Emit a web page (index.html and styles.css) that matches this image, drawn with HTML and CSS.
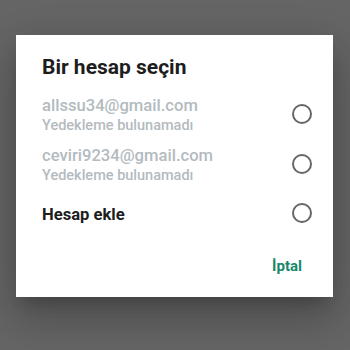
FILE: index.html
```html
<!DOCTYPE html>
<html lang="tr">
<head>
    <meta charset="UTF-8">
    <meta name="viewport" content="width=device-width, initial-scale=1.0">
    <title>Bir hesap seçin</title>
    <link rel="stylesheet" href="styles.css">
</head>
<body>
    <div class="dialog">
        <h1 class="dialog-title">Bir hesap seçin</h1>

        <ul class="account-list">
            <li class="account-row disabled">
                <div class="account-text">
                    <span class="account-email">allssu34@gmail.com</span>
                    <span class="account-note">Yedekleme bulunamadı</span>
                </div>
                <span class="radio"></span>
            </li>
            <li class="account-row disabled">
                <div class="account-text">
                    <span class="account-email">ceviri9234@gmail.com</span>
                    <span class="account-note">Yedekleme bulunamadı</span>
                </div>
                <span class="radio"></span>
            </li>
            <li class="account-row">
                <div class="account-text">
                    <span class="account-add">Hesap ekle</span>
                </div>
                <span class="radio"></span>
            </li>
        </ul>

        <div class="dialog-actions">
            <button class="btn-text">İptal</button>
        </div>
    </div>
</body>
</html>
```

FILE: styles.css
```css
* {
    margin: 0;
    padding: 0;
    box-sizing: border-box;
    font-family: Roboto, "Liberation Sans", sans-serif;
}

body {
    background-color: #666666;
    width: 350px;
    height: 350px;
    overflow: hidden;
}

.dialog {
    background-color: #ffffff;
    width: 317px;
    height: 262px;
    margin: 35px 0 0 16px;
    padding: 20px 21px 0 26px;
    box-shadow: 0 11px 15px -7px rgba(0,0,0,0.2),
                0 24px 38px 3px rgba(0,0,0,0.14),
                0 9px 46px 8px rgba(0,0,0,0.12);
}

.dialog-title {
    font-size: 21px;
    line-height: 25px;
    font-weight: 700;
    color: #1d1d1d;
    height: 34px;
}

.account-list {
    list-style: none;
}

.account-row {
    display: flex;
    align-items: center;
    justify-content: space-between;
    height: 49.5px;
}

.account-text {
    display: flex;
    flex-direction: column;
    padding-top: 5px;
}

.account-email {
    font-size: 16.6px;
    line-height: 20px;
    font-weight: 500;
    color: #b3bbbf;
}

.account-note {
    font-size: 14.5px;
    line-height: 20px;
    font-weight: 500;
    color: #b3bbbf;
}

.account-add {
    font-size: 16.6px;
    line-height: 20px;
    font-weight: 700;
    color: #1d1d1d;
}

.radio {
    width: 20px;
    height: 20px;
    border: 2px solid #666666;
    border-radius: 50%;
    margin-top: 1px;
}

.dialog-actions {
    display: flex;
    justify-content: flex-end;
    margin-top: 10px;
    padding-right: 10px;
}

.btn-text {
    background: none;
    border: none;
    font-size: 15px;
    line-height: 36px;
    font-weight: 700;
    color: #16876b;
    cursor: pointer;
}
```
